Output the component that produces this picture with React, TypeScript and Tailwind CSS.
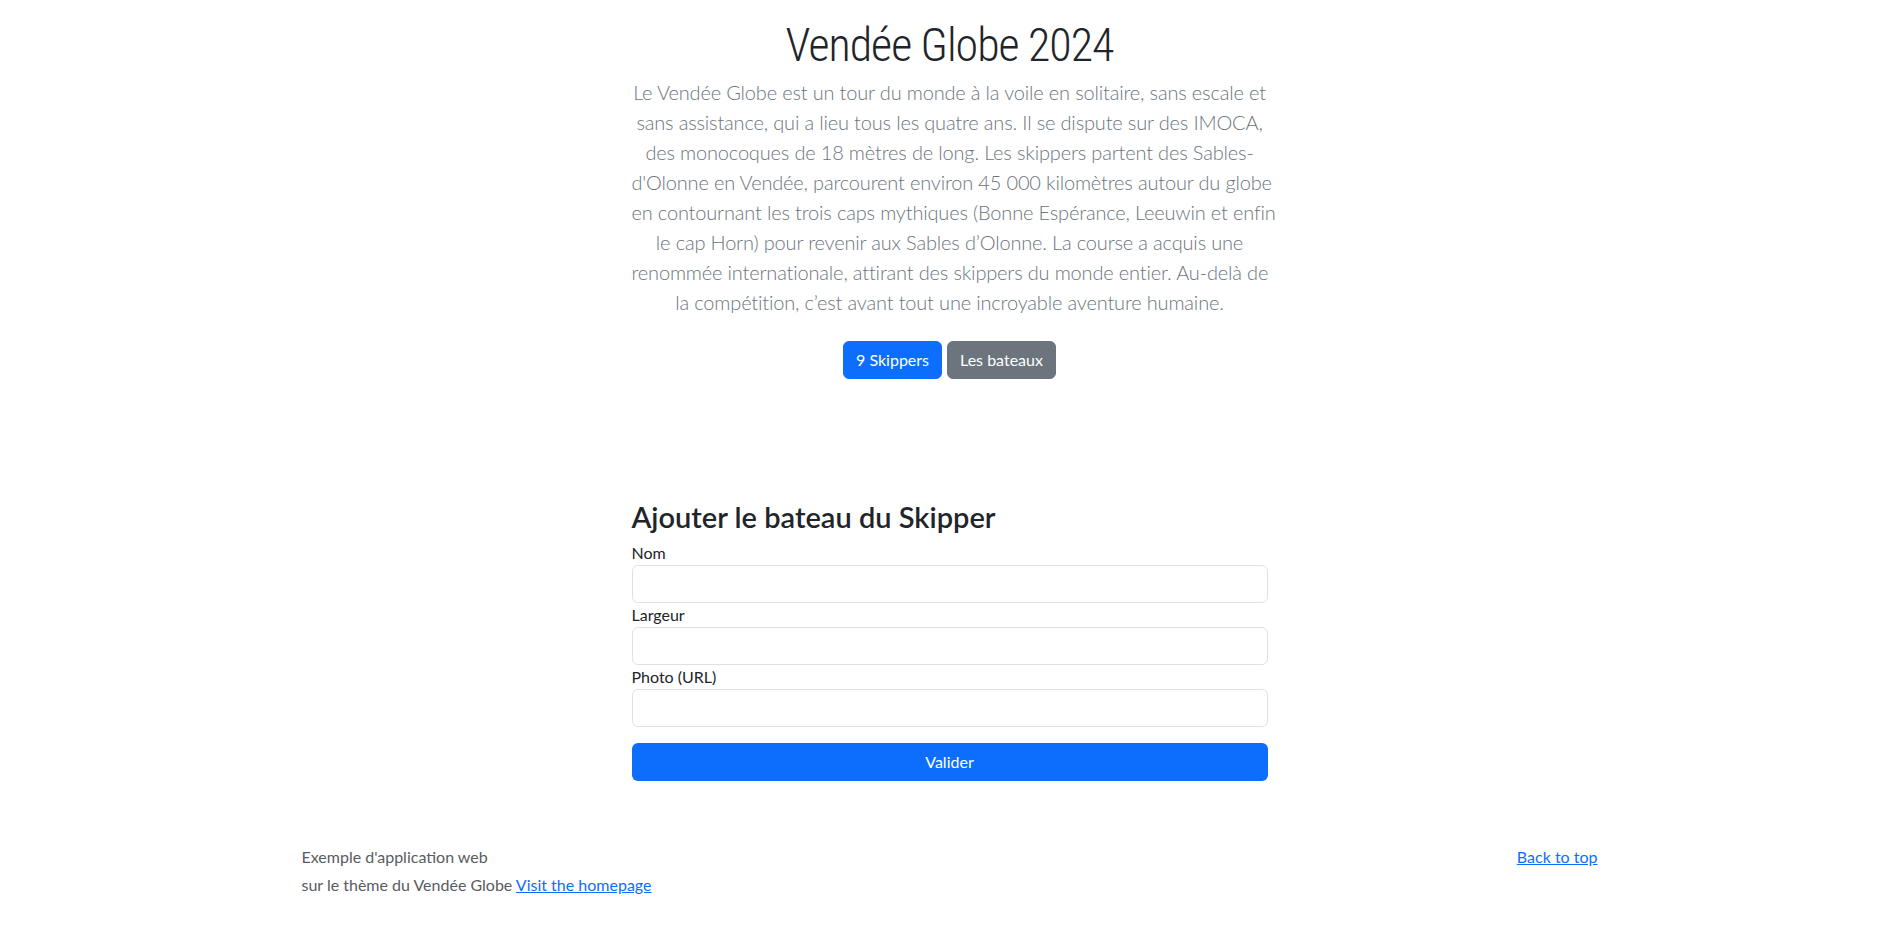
import { useState } from "react";

const leadLines = [
  "Le Vendée Globe est un tour du monde à la voile en solitaire, sans escale et",
  "sans assistance, qui a lieu tous les quatre ans. Il se dispute sur des IMOCA,",
  "des monocoques de 18 mètres de long. Les skippers partent des Sables-",
  "d'Olonne en Vendée, parcourent environ 45 000 kilomètres autour du globe",
  "en contournant les trois caps mythiques (Bonne Espérance, Leeuwin et enfin",
  "le cap Horn) pour revenir aux Sables d’Olonne. La course a acquis une",
  "renommée internationale, attirant des skippers du monde entier. Au-delà de",
  "la compétition, c’est avant tout une incroyable aventure humaine.",
];

const fields = ["Nom", "Largeur", "Photo (URL)"];

export default function App() {
  const [values, setValues] = useState<Record<string, string>>({});

  return (
    <div className="min-h-screen bg-white text-[#212529] font-['Lato','Liberation_Sans',sans-serif]">
      {/* hero */}
      <section className="pt-[17px] text-center">
        <h1 className="text-[46px] font-light leading-[57.6px] tracking-[-1px] mb-[2px] font-['Roboto_Condensed','Roboto',sans-serif]">
          Vendée Globe 2024
        </h1>
        <div className="mx-auto w-[636px]">
          <p className="text-[20px] font-light leading-[30px] tracking-[-0.17px] text-[#6c757d] mb-6">
            {leadLines.map((line) => (
              <span key={line} className="block whitespace-nowrap">
                {line}
              </span>
            ))}
          </p>
          <div className="flex justify-center gap-[5px]">
            <button
              type="button"
              className="px-3 py-[6px] text-base leading-6 text-white bg-[#0d6efd] border border-[#0d6efd] rounded-[6px]"
            >
              9 Skippers
            </button>
            <button
              type="button"
              className="px-3 py-[6px] text-base leading-6 text-white bg-[#6c757d] border border-[#6c757d] rounded-[6px]"
            >
              Les bateaux
            </button>
          </div>
        </div>
      </section>

      {/* form */}
      <section className="mx-auto w-[636px] mt-[121px]">
        <h3 className="text-[29px] font-semibold leading-[33.6px] mb-2">Ajouter le bateau du Skipper</h3>
        <form onSubmit={(e) => e.preventDefault()}>
          {fields.map((f) => (
            <div key={f}>
              <label className="block text-base leading-6">{f}</label>
              <input
                value={values[f] ?? ""}
                onChange={(e) => setValues({ ...values, [f]: e.target.value })}
                className="block w-full h-[38px] px-3 border border-[#dee2e6] rounded-[6px] outline-none"
              />
            </div>
          ))}
          <button
            type="submit"
            className="mt-4 w-full h-[38px] text-base text-white bg-[#0d6efd] rounded-[6px]"
          >
            Valider
          </button>
        </form>
      </section>

      {/* footer */}
      <footer className="mx-auto w-[1296px] mt-[62px] pb-8 flex justify-between text-base leading-[28px] text-[#595c5f]">
        <div>
          <p>Exemple d'application web</p>
          <p>
            sur le thème du Vendée Globe{" "}
            <a href="#" className="text-[#0d6efd] underline">
              Visit the homepage
            </a>
          </p>
        </div>
        <p>
          <a href="#" className="text-[#0d6efd] underline">
            Back to top
          </a>
        </p>
      </footer>
    </div>
  );
}
